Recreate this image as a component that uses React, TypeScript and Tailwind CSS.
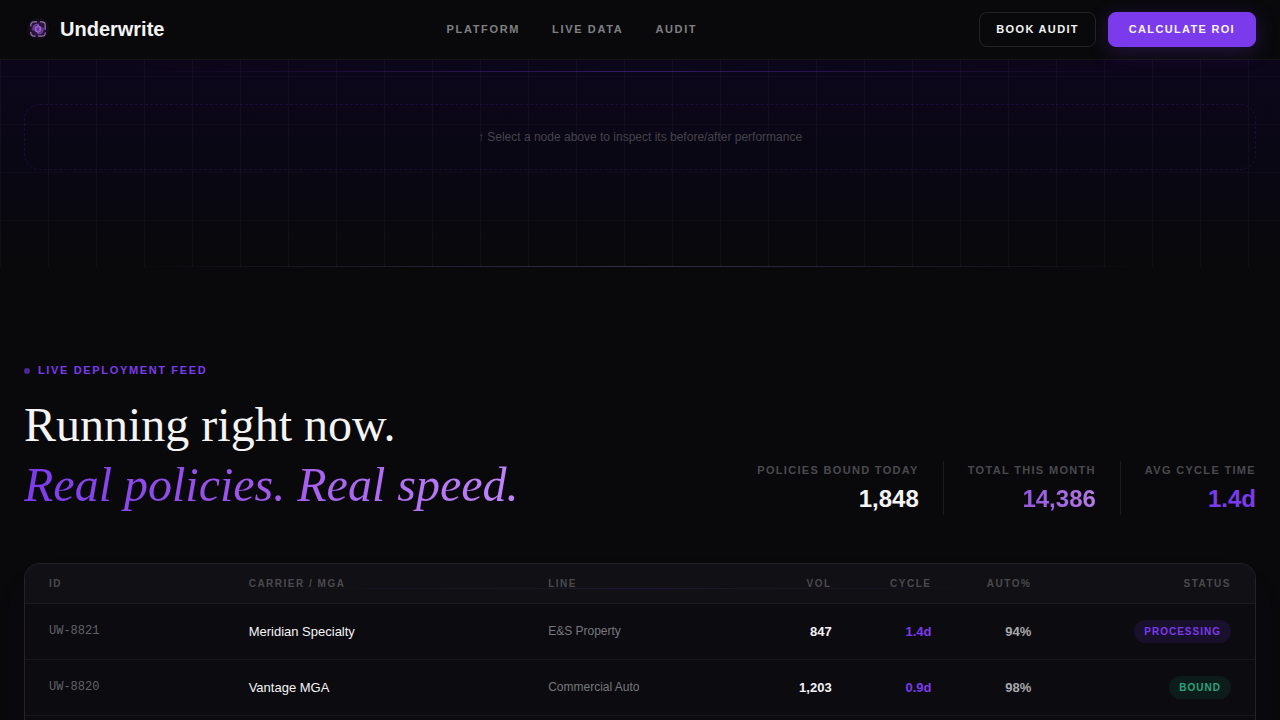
import React from 'react';
import clsx from 'clsx';

// =============================================================================
// TYPES
// =============================================================================

type Status = 'Processing' | 'Bound';

interface Policy {
  id: string;
  carrier: string;
  line: string;
  volume: string;
  cycle: string;
  auto: string;
  status: Status;
}

interface Stat {
  label: string;
  value: string;
  valueClass: string;
}

// =============================================================================
// DATA
// =============================================================================

const navLinks = [
  { label: 'Platform', href: '#platform' },
  { label: 'Live Data', href: '#live-data' },
  { label: 'Audit', href: '#audit' },
];

const stats: Stat[] = [
  { label: 'Policies bound today', value: '1,848', valueClass: 'text-[#f4f4f5]' },
  {
    label: 'Total this month',
    value: '14,386',
    valueClass: 'bg-linear-to-r from-[#9455e0] to-[#b57be6] bg-clip-text text-transparent',
  },
  { label: 'Avg cycle time', value: '1.4d', valueClass: 'text-[#7c3aed]' },
];

const columns = [
  { label: 'ID', className: 'col-span-2 text-left' },
  { label: 'Carrier / MGA', className: 'col-span-3 text-left' },
  { label: 'Line', className: 'col-span-2 text-left' },
  { label: 'Vol', className: 'text-right' },
  { label: 'Cycle', className: 'text-right' },
  { label: 'Auto%', className: 'text-right' },
  { label: 'Status', className: 'col-span-2 text-right' },
];

const policies: Policy[] = [
  {
    id: 'UW-8821',
    carrier: 'Meridian Specialty',
    line: 'E&S Property',
    volume: '847',
    cycle: '1.4d',
    auto: '94%',
    status: 'Processing',
  },
  {
    id: 'UW-8820',
    carrier: 'Vantage MGA',
    line: 'Commercial Auto',
    volume: '1,203',
    cycle: '0.9d',
    auto: '98%',
    status: 'Bound',
  },
];

// =============================================================================
// HEADER
// =============================================================================

const LogoMark: React.FC = () => (
  <svg className="size-7" viewBox="0 0 28 28" fill="none" aria-hidden="true">
    <circle cx="14" cy="14" r="11" fill="#a855f7" opacity="0.06" />
    <rect x="6.5" y="6.5" width="15" height="15" rx="4" fill="#2a1440" />
    <path
      d="M6.8 11.5V10A3.2 3.2 0 0 1 10 6.8h3M16 6.8h2A3.2 3.2 0 0 1 21.2 10v5M21.2 17.5v.5a3.2 3.2 0 0 1-3.2 3.2h-4M11.5 21.2H10A3.2 3.2 0 0 1 6.8 18v-1"
      stroke="#8f76a3"
      strokeWidth="1.2"
    />
    <path d="M9 15.5C8.5 11 11 9 15 9.5M19 12.5c.5 4-1.5 6.5-5.5 6" stroke="#7a42ab" strokeWidth="1.4" />
    <path d="m14 10.5 3 1.7v3.6l-3 1.7-3-1.7v-3.6z" fill="#8b4bc4" stroke="#a276c6" />
    <path d="M14 12.5v3" stroke="#4c1d72" />
  </svg>
);

const Header: React.FC = () => (
  <header className="relative z-10 flex h-[60px] shrink-0 items-center justify-between border-b border-white/5 bg-[#09090b] px-6">
    <a href="#top" className="flex items-center gap-2 pb-px text-xl font-bold text-[#f4f4f5]">
      <LogoMark />
      Underwrite
    </a>

    <nav
      aria-label="Main"
      className="flex gap-8 text-[11px] font-bold tracking-[0.15em] text-[#808084] uppercase"
    >
      {navLinks.map((link) => (
        <a key={link.href} href={link.href} className="hover:text-white">
          {link.label}
        </a>
      ))}
    </nav>

    <div className="flex gap-3 text-[11px] leading-[17px] font-bold tracking-[0.12em] text-[#f4f4f5]">
      <button type="button" className="cursor-pointer rounded-lg border border-white/10 px-4 py-2 uppercase">
        Book Audit
      </button>
      <button
        type="button"
        className="cursor-pointer rounded-lg border border-[#7c3aed] bg-[#7c3aed] px-5 py-2 uppercase shadow-[0_4px_20px_rgba(124,58,237,0.25)]"
      >
        Calculate ROI
      </button>
    </div>
  </header>
);

// =============================================================================
// NODE INSPECTOR
// =============================================================================

const NodeInspector: React.FC = () => (
  <section className="shrink-0 bg-linear-to-b from-[#0c061b] via-[#090712] via-60% to-[#09090b]">
    <div className="bg-[linear-gradient(to_right,rgba(255,255,255,0.03)_1px,transparent_1px),linear-gradient(to_bottom,rgba(255,255,255,0.02)_1px,transparent_1px)] bg-size-[48px_48px] bg-position-[0_16px] pt-[11px]">
      <div className="h-px bg-linear-to-r from-transparent from-10% via-[#7c3aed]/35 to-transparent to-90%" />
      <div className="px-6 pt-8 pb-24">
        <p className="rounded-2xl border border-dashed border-[#7c3aed]/15 px-6 pt-6 pb-[23px] text-center text-xs leading-[17px] text-[#45434b]">
          ↑ Select a node above to inspect its before/after performance
        </p>
      </div>
      <div className="h-px bg-linear-to-r from-transparent from-10% via-[#352e48] to-transparent to-90%" />
    </div>
  </section>
);

// =============================================================================
// LIVE FEED
// =============================================================================

const StatusBadge: React.FC<{ status: Status }> = ({ status }) => (
  <span
    className={clsx(
      'inline-block rounded-full px-2.5 py-1 text-[10px] leading-[15px] font-bold tracking-widest uppercase',
      status === 'Bound' ? 'bg-[#10b981]/10 text-[#2aa57c]' : 'bg-[#7c3aed]/12 text-[#7c3aed]',
    )}
  >
    {status}
  </span>
);

const FeedHeading: React.FC = () => (
  <div className="flex items-end justify-between">
    <div>
      <p className="mb-[17px] flex items-center gap-2 text-[11px] leading-[15px] font-bold tracking-[0.15em] text-[#7c3aed] uppercase">
        <span className="size-1.5 rounded-full bg-[#7c3aed]/60" />
        Live deployment feed
      </p>
      <h2 className="font-['Liberation_Serif',serif] text-5xl leading-[60px] text-[#f4f4f5]">
        Running right now.
        <br />
        <em className="inline-block bg-linear-to-r from-[#7c3aed] via-[#a458ec] to-[#c084fc] bg-clip-text text-transparent">
          Real policies. Real speed.
        </em>
      </h2>
    </div>

    <dl className="flex gap-6 text-right">
      {stats.map((stat, index) => (
        <div key={stat.label} className={clsx(index > 0 && 'border-l border-white/8 pl-6')}>
          <dt className="mb-1 text-[11px] leading-[18px] font-bold tracking-[0.12em] text-[#4a4a4e] uppercase">
            {stat.label}
          </dt>
          <dd className="text-2xl font-bold">
            <span className={stat.valueClass}>{stat.value}</span>
          </dd>
        </div>
      ))}
    </dl>
  </div>
);

const PolicyTable: React.FC = () => (
  <div className="relative mt-12 overflow-hidden rounded-2xl border border-white/10 bg-[#0c0b10] pb-14 shadow-[0_20px_40px_rgba(124,58,237,0.04)]">
    <div className="pointer-events-none absolute inset-x-0 top-6 h-px bg-linear-to-r from-transparent from-20% via-[#7c3aed]/15 to-transparent to-80%" />
    <table className="block">
      <thead className="block">
        <tr className="grid grid-cols-12 gap-4 border-b border-white/5 bg-[#111015] px-6 py-3 text-[10px] leading-[15px] tracking-[0.15em] text-[#4a4a4e] uppercase">
          {columns.map((column) => (
            <th key={column.label} scope="col" className={clsx('font-bold', column.className)}>
              {column.label}
            </th>
          ))}
        </tr>
      </thead>
      <tbody className="block">
        {policies.map((policy) => (
          <tr
            key={policy.id}
            className="grid grid-cols-12 gap-4 border-b border-white/5 px-6 py-4 text-[13px] leading-[23px]"
          >
            <td className="col-span-2 font-['Liberation_Mono',monospace] text-xs leading-[22px] text-[#626267]">
              {policy.id}
            </td>
            <td className="col-span-3 text-[#f4f4f5]">{policy.carrier}</td>
            <td className="col-span-2 text-xs leading-[22px] text-[#77777c]">{policy.line}</td>
            <td className="text-right font-bold text-[#f4f4f5]">{policy.volume}</td>
            <td className="text-right font-bold text-[#7c3aed]">{policy.cycle}</td>
            <td className="text-right font-bold text-[#a9a9ad]">{policy.auto}</td>
            <td className="col-span-2 flex justify-end">
              <StatusBadge status={policy.status} />
            </td>
          </tr>
        ))}
      </tbody>
    </table>
  </div>
);

// =============================================================================
// PAGE
// =============================================================================

const App: React.FC = () => (
  <div
    id="top"
    className="flex h-screen flex-col overflow-hidden bg-[#09090b] font-['Liberation_Sans',Arial,sans-serif]"
  >
    <Header />
    <main>
      <NodeInspector />
      <section id="live-data" className="px-6 pt-24">
        <FeedHeading />
        <PolicyTable />
      </section>
    </main>
  </div>
);

export default App;
